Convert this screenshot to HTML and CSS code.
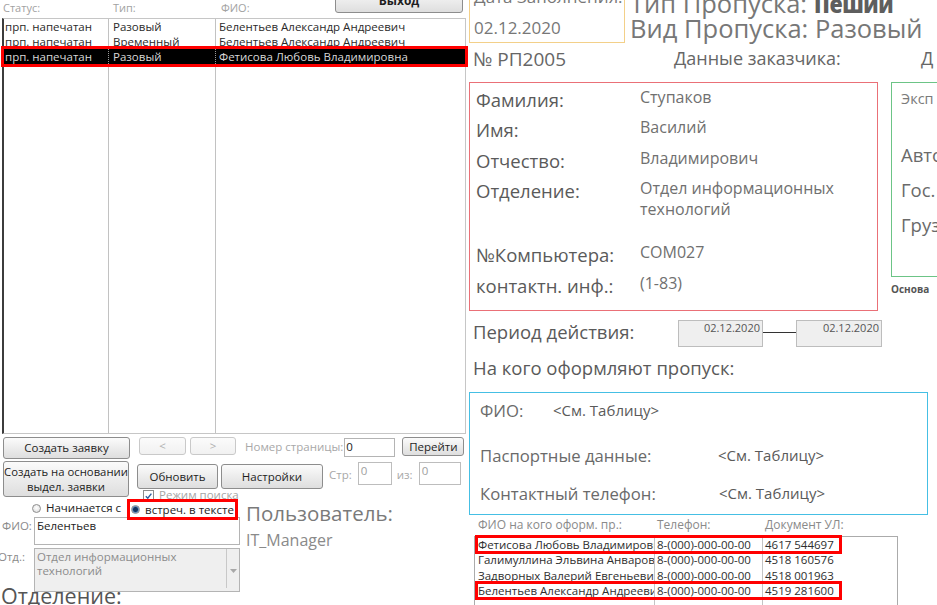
FILE: index.html
```html
<!DOCTYPE html>
<html lang="ru">
<head>
<meta charset="utf-8">
<title>Пропуска</title>
<link rel="stylesheet" href="styles.css">
</head>
<body>
<div class="app">
  <section class="left">
    <div class="list-head">
      <span class="h h1">Статус:</span>
      <span class="h h2">Тип:</span>
      <span class="h h3">ФИО:</span>
      <button class="btn exit">Выход</button>
    </div>
    <div class="list">
      <div class="row"><span>прп. напечатан</span><span>Разовый</span><span>Белентьев Александр Андреевич</span></div>
      <div class="row"><span>прп. напечатан</span><span>Временный</span><span>Белентьев Александр Андреевич</span></div>
      <div class="row sel"><span>прп. напечатан</span><span>Разовый</span><span>Фетисова Любовь Владимировна</span></div>
    </div>

    <div class="ctl-a">
      <button class="btn create">Создать заявку</button>
      <button class="btn nav prev">&lt;</button>
      <button class="btn nav next">&gt;</button>
      <span class="lbl page-lbl">Номер страницы:</span>
      <span class="field page-in">0</span>
      <button class="btn go">Перейти</button>
    </div>

    <div class="ctl-b">
      <button class="btn create2"><span>Создать на основании</span><span>выдел. заявки</span></button>
      <div class="mid">
        <div class="mid-top">
          <button class="btn refresh">Обновить</button>
          <button class="btn settings">Настройки</button>
          <span class="lbl str-lbl">Стр:</span>
          <span class="field gray str-in">0</span>
          <span class="lbl of-lbl">из:</span>
          <span class="field gray of-in">0</span>
        </div>
        <div class="chk-row">
          <span class="chk"><svg viewBox="0 0 10 10" width="10" height="10"><path d="M2 5.2 L4.2 7.4 L8.2 2.4" fill="none" stroke="#2f5f9e" stroke-width="1.6"/></svg></span>
          <span class="chk-text">Режим поиска</span>
        </div>
      </div>
    </div>

    <div class="lower">
      <div class="lower-left">
        <div class="radios">
          <span class="opt opt1"><span class="radio"></span><span class="opt-text">Начинается с</span></span>
          <span class="opt opt2"><span class="radio on"></span><span class="opt-text">встреч. в тексте</span></span>
        </div>
        <div class="frow">
          <span class="flbl">ФИО:</span>
          <span class="field fio-in">Белентьев</span>
        </div>
        <div class="frow otd-row">
          <span class="flbl otd-lbl">Отд.:</span>
          <span class="combo">
            <span class="combo-text">Отдел информационных технологий</span>
            <span class="combo-btn"><svg viewBox="0 0 7 4" width="7" height="4"><path d="M0 0 H7 L3.5 4 Z" fill="#a8a8a8"/></svg></span>
          </span>
        </div>
        <div class="big-otd">Отделение:</div>
      </div>
      <div class="user">
        <div class="user-title">Пользователь:</div>
        <div class="user-name">IT_Manager</div>
      </div>
    </div>
  </section>

  <section class="right">
    <div class="top">
      <div class="datebox">
        <div class="dlabel">Дата Заполнения:</div>
        <div class="dvalue">02.12.2020</div>
      </div>
      <div class="titles">
        <div class="title">Тип Пропуска: <b class="bold">Пеший</b></div>
        <div class="title">Вид Пропуска: Разовый</div>
      </div>
    </div>

    <div class="row2">
      <span class="num">№ РП2005</span>
      <span class="cust">Данные заказчика:</span>
      <span class="cust d">Д</span>
    </div>

    <div class="boxes">
      <div class="red-box">
        <div class="kv h30"><span class="k">Фамилия:</span><span class="v">Ступаков</span></div>
        <div class="kv h31"><span class="k">Имя:</span><span class="v">Василий</span></div>
        <div class="kv h30"><span class="k">Отчество:</span><span class="v">Владимирович</span></div>
        <div class="kv h64"><span class="k">Отделение:</span><span class="v">Отдел информационных<br>технологий</span></div>
        <div class="kv h31"><span class="k">№Компьютера:</span><span class="v">COM027</span></div>
        <div class="kv"><span class="k">контактн. инф.:</span><span class="v">(1-83)</span></div>
      </div>
      <div class="green-col">
        <div class="green-box">
          <div class="g-small">Эксп</div>
          <div class="g g1">Авто</div>
          <div class="g">Гос.</div>
          <div class="g">Груз</div>
        </div>
        <div class="osnova">Основа</div>
      </div>
    </div>

    <div class="period">
      <span class="period-lbl">Период действия:</span>
      <span class="pdate">02.12.2020</span>
      <span class="pline"></span>
      <span class="pdate p2">02.12.2020</span>
    </div>

    <div class="who">На кого оформляют пропуск:</div>

    <div class="cyan-box">
      <div class="crow r1"><span class="ck ck1">ФИО:</span><span class="cv">&lt;См. Таблицу&gt;</span></div>
      <div class="crow r2"><span class="ck">Паспортные данные:</span><span class="cv">&lt;См. Таблицу&gt;</span></div>
      <div class="crow r3"><span class="ck ck3">Контактный телефон:</span><span class="cv">&lt;См. Таблицу&gt;</span></div>
    </div>

    <div class="thead">
      <span class="tc1">ФИО на кого оформ. пр.:</span>
      <span class="tc2">Телефон:</span>
      <span class="tc3">Документ УЛ:</span>
    </div>
    <div class="table">
      <div class="trow mark"><span>Фетисова Любовь Владимировна</span><span>8-(000)-000-00-00</span><span>4617 544697</span></div>
      <div class="trow"><span>Галимуллина Эльвина Анваровна</span><span>8-(000)-000-00-00</span><span>4518 160576</span></div>
      <div class="trow"><span>Задворных Валерий Евгеньевич</span><span>8-(000)-000-00-00</span><span>4518 001963</span></div>
      <div class="trow mark"><span>Белентьев Александр Андреевич</span><span>8-(000)-000-00-00</span><span>4519 281600</span></div>
    </div>
  </section>
</div>
</body>
</html>
```

FILE: styles.css
```css
* { box-sizing: border-box; }
html, body { margin: 0; padding: 0; }
body {
  width: 937px;
  height: 605px;
  overflow: hidden;
  background: #fff;
  font-family: "Open Sans", "Noto Sans", sans-serif;
  color: #333;
}
.app { display: flex; width: 937px; height: 605px; align-items: flex-start; }

/* ---------- left ---------- */
.left { width: 466px; flex: none; display: flex; flex-direction: column; }
.left > *, .right > * { flex-shrink: 0; }
.list-head { height: 18px; display: flex; align-items: flex-start; padding-left: 3px; }
.h { font-size: 11px; color: #a2a2a2; line-height: 16px; }
.h1 { width: 110px; }
.h2 { width: 108px; }
.h3 { flex: 1; }

.btn {
  font-family: "Open Sans", "Noto Sans", sans-serif;
  font-size: 11.5px;
  color: #1e1e1e;
  background: linear-gradient(#fbfbfb, #ececec 50%, #dedede);
  border: 1px solid #8d8d8d;
  border-radius: 3px;
  padding: 0;
  display: flex;
  flex-direction: column;
  align-items: center;
  justify-content: center;
  line-height: 14px;
  flex: none;
  white-space: nowrap;
}
.exit { width: 128px; height: 24px; margin-top: -11px; margin-right: 3px; font-weight: 700; font-size: 12px; }

.list {
  margin-left: 2px;
  width: 464px;
  height: 416px;
  border: 1px solid #c6c6c6;
  border-left: 2px solid #3c3c3c;
  background-image: linear-gradient(#c2c2c2, #c2c2c2), linear-gradient(#c2c2c2, #c2c2c2);
  background-size: 1px 100%, 1px 100%;
  background-position: 104px 0, 211px 0;
  background-repeat: no-repeat;
}
.row {
  display: grid;
  grid-template-columns: 104px 107px 1fr;
  height: 15px;
  line-height: 15px;
  font-size: 11.5px;
  color: #2a2a2a;
  white-space: nowrap;
}
.row span { overflow: hidden; padding-left: 5px; }
.row span:first-child { padding-left: 1px; }
.row span:last-child { padding-left: 4px; }
.row.sel {
  background: #000;
  color: #d8d8d8;
  outline: 3px solid #f00;
  position: relative;
  z-index: 2;
}
.row.sel span + span { border-left: 1px dotted #999; }
.row.sel span:nth-child(2) { padding-left: 4px; }
.row.sel span:last-child { padding-left: 3px; }

.lbl { font-size: 11.5px; color: #a8a8a8; line-height: 14px; flex: none; }
.field {
  flex: none;
  border: 1px solid #b4b4b4;
  background: #fff;
  font-size: 11.5px;
  color: #222;
  line-height: 14px;
  padding: 1px 2px;
}
.field.gray { color: #a0a0a0; border-color: #bdbdbd; }

.ctl-a { display: flex; align-items: flex-start; margin-top: 3px; height: 22px; }
.create { width: 127px; height: 22px; margin-left: 3px; }
.nav { width: 47px; height: 18px; color: #b0b0b0; border-color: #c9c9c9; background: linear-gradient(#fbfbfb, #f1f1f1); }
.prev { margin-left: 9px; }
.next { width: 46px; margin-left: 4px; }
.page-lbl { margin-left: 9px; margin-top: 3px; }
.page-in { width: 51px; height: 19px; margin-left: 1px; margin-top: 1px; padding: 1px 1px; }
.go { width: 62px; height: 19px; margin-left: 7px; }

.ctl-b { display: flex; align-items: flex-start; margin-top: 2px; }
.create2 { width: 126px; height: 36px; margin-left: 3px; font-size: 11.3px; line-height: 15px; }
.mid { margin-left: 8px; margin-top: 1px; display: flex; flex-direction: column; }
.mid-top { display: flex; align-items: flex-start; height: 27px; }
.refresh { width: 81px; height: 25px; margin-top: 2px; }
.settings { width: 102px; height: 25px; margin-top: 2px; margin-left: 3px; }
.str-lbl { margin-left: 6px; margin-top: 6px; }
.str-in { width: 34px; height: 23px; margin-left: 6px; }
.of-lbl { margin-left: 5px; margin-top: 6px; }
.of-in { width: 42px; height: 23px; margin-left: 6px; }
.chk-row { height: 9px; overflow: hidden; display: flex; align-items: flex-start; margin-top: 1px; margin-left: 6px; }
.chk { width: 11px; height: 11px; border: 1px solid #8c8c8c; background: #fff; display: flex; align-items: center; justify-content: center; flex: none; }
.chk-text { font-size: 11.5px; color: #a6a6a6; line-height: 12px; margin-left: 5px; margin-top: -1px; }

.lower { display: flex; }
.lower-left { width: 242px; flex: none; display: flex; flex-direction: column; }
.lower-left > * { flex-shrink: 0; }
.radios { height: 18px; display: flex; align-items: center; }
.opt { display: flex; align-items: center; height: 15px; }
.opt1 { margin-left: 32px; }
.opt2 { margin-left: 9px; width: 105px; padding-left: 1px; outline: 3px solid #f00; outline-offset: 0; position: relative; z-index: 2; background: #fff; margin-top: 3px; }
.opt-text { font-size: 11.5px; color: #222; margin-left: 5px; line-height: 14px; white-space: nowrap; }
.radio {
  width: 9px; height: 9px; border-radius: 50%;
  border: 1px solid #8e8e8e;
  background: radial-gradient(circle at 50% 40%, #fff, #d8d8d8);
  flex: none;
}
.radio.on { background: radial-gradient(circle, #14355f 0 2px, #5d8fc4 3px, #d8e4f0 4.5px); }

.frow { display: flex; align-items: flex-start; }
.flbl { width: 34px; flex: none; font-size: 11.5px; color: #8a8a8a; padding-left: 2px; line-height: 14px; margin-top: 2px; }
.fio-in { width: 206px; height: 28px; padding: 1px 2px; }
.otd-row { margin-top: 3px; }
.otd-lbl { padding-left: 0; margin-left: -2px; width: 36px; }
.combo {
  width: 206px; height: 44px;
  border: 1px solid #b4b4b4;
  background: #efefef;
  display: flex;
}
.combo-text { flex: 1; font-size: 11.5px; color: #8c8c8c; line-height: 14px; padding: 1px 2px; }
.combo-btn { width: 13px; border-left: 1px solid #c8c8c8; margin: 0 0 3px; display: flex; align-items: center; justify-content: center; padding-top: 4px; }
.big-otd { font-size: 21.5px; line-height: 26px; color: #555; margin-top: -9px; padding-left: 1px; white-space: nowrap; }

.user { margin-left: 4px; }
.user-title { font-size: 20.5px; line-height: 26px; color: #7a7a7a; margin-top: 1px; white-space: nowrap; }
.user-name { font-size: 16px; line-height: 20px; color: #8a8a8a; margin-top: 4px; }

/* ---------- right ---------- */
.right { width: 469px; flex: none; margin-left: 2px; display: flex; flex-direction: column; }
.top { display: flex; height: 43px; }
.datebox {
  margin-left: 1px; width: 156px; height: 49px; margin-top: -6px;
  border: 1px solid #f3d089;
  padding-left: 4px;
  flex: none;
  overflow: hidden;
}
.dlabel { font-size: 17px; line-height: 20px; color: #777; margin-top: -8px; white-space: nowrap; }
.dvalue { font-size: 17px; line-height: 20px; color: #777; margin-top: 11px; }
.titles { margin-left: 5px; margin-top: -9px; }
.title { font-size: 25.5px; line-height: 25px; color: #777; white-space: nowrap; }
.bold { font-weight: 800; color: #5e5e5e; display: inline-block; transform: scaleX(0.84); transform-origin: left center; letter-spacing: -0.5px; }

.row2 { display: flex; height: 39px; padding-top: 6px; white-space: nowrap; }
.num { width: 201px; margin-left: 5px; font-size: 19px; line-height: 20px; color: #666; flex: none; }
.cust { width: 247px; font-size: 18px; line-height: 20px; color: #666; flex: none; margin-top: -1px; }
.cust.d { width: auto; }

.boxes { display: flex; align-items: flex-start; }
.red-box {
  margin-left: 1px; width: 409px; height: 229px;
  border: 1px solid #ea7077;
  padding: 7px 0 0 6px;
  flex: none;
}
.kv { display: flex; align-items: flex-start; }
.h30 { height: 30px; }
.h31 { height: 31px; }
.h64 { height: 64px; }
.k { width: 164px; flex: none; font-size: 18.5px; line-height: 20px; color: #5a5a5a; white-space: nowrap; }
.v { font-size: 16px; line-height: 21px; color: #707070; margin-top: -3px; white-space: nowrap; }

.green-col { margin-left: 13px; flex: none; }
.green-box {
  width: 70px; height: 195px;
  border: 1px solid #6cc486;
  border-right: none;
  padding: 7px 0 0 9px;
  color: #6a6a6a;
}
.g-small { font-size: 14.5px; line-height: 18px; color: #7a7a7a; }
.g { font-size: 18.5px; line-height: 20px; margin-top: 15px; }
.g1 { margin-top: 37px; }
.osnova { font-size: 10px; font-weight: 700; line-height: 12px; color: #555; margin-top: 6px; }

.period { display: flex; align-items: flex-start; margin-top: 9px; height: 27px; }
.period-lbl { width: 205px; margin-left: 5px; font-size: 18.5px; line-height: 27px; color: #5a5a5a; margin-top: -2px; flex: none; white-space: nowrap; }
.pdate {
  width: 85px; height: 27px;
  background: #efefef;
  border: 1px solid #bdbdbd;
  font-size: 11px;
  line-height: 13px;
  color: #555;
  text-align: right;
  padding-right: 2px;
  flex: none;
}
.pdate.p2 { width: 86px; }
.pline { width: 33px; height: 1px; background: #333; margin-top: 12px; flex: none; }

.who { font-size: 18.5px; line-height: 20px; color: #5a5a5a; margin-left: 5px; margin-top: 11px; white-space: nowrap; }

.cyan-box {
  margin-left: 1px; width: 459px; height: 123px;
  margin-top: 14px;
  border: 1px solid #45bfe4;
  padding: 8px 0 0 10px;
}
.crow { display: flex; align-items: flex-start; }
.r1 { height: 45px; }
.r2 { height: 38px; }
.ck { width: 238px; flex: none; font-size: 16.7px; line-height: 20px; color: #6a6a6a; white-space: nowrap; }
.ck1 { width: 73px; }
.ck3 { width: 239px; }
.cv { font-size: 15px; line-height: 20px; color: #5a5a5a; margin-top: -1px; white-space: nowrap; }

.thead { display: flex; height: 21px; padding: 3px 0 0 10px; font-size: 12px; line-height: 14px; color: #8a8a8a; white-space: nowrap; }
.tc1 { width: 179px; }
.tc2 { width: 108px; }

.table {
  margin-left: 6px;
  width: 424px;
  height: 90px;
  border: 1px solid #ababab;
  background-image: linear-gradient(#c4c4c4, #c4c4c4), linear-gradient(#c4c4c4, #c4c4c4);
  background-size: 1px 100%, 1px 100%;
  background-position: 179px 0, 287px 0;
  background-repeat: no-repeat;
}
.trow {
  display: grid;
  grid-template-columns: 179px 108px 1fr;
  height: 15.34px;
  line-height: 15px;
  font-size: 11.5px;
  color: #2e2e2e;
  white-space: nowrap;
  position: relative;
}
.trow span { overflow: hidden; padding-left: 3px; }
.trow.mark::after {
  content: "";
  position: absolute;
  left: 0; top: -2px; bottom: -2px;
  width: 361px;
  border: 3px solid #f00;
}
```
